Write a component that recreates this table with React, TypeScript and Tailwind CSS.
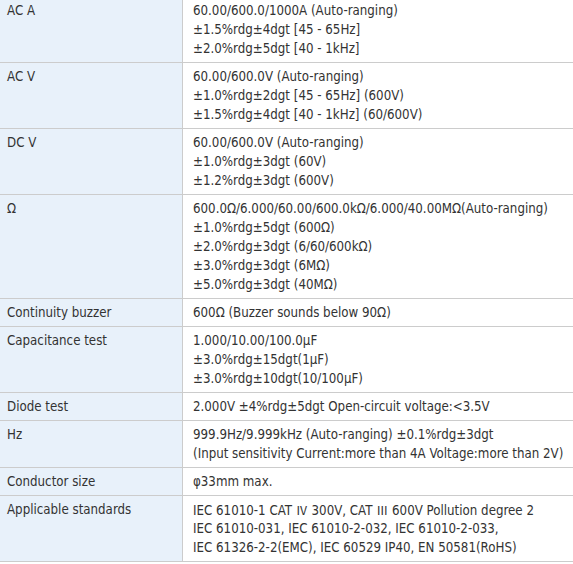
import React from "react";

const rows: { label: string; lines: React.ReactNode[] }[] = [
  { label: "AC A", lines: ["60.00/600.0/1000A (Auto-ranging)", "±1.5%rdg±4dgt [45 - 65Hz]", "±2.0%rdg±5dgt [40 - 1kHz]"] },
  { label: "AC V", lines: ["60.00/600.0V (Auto-ranging)", "±1.0%rdg±2dgt [45 - 65Hz] (600V)", "±1.5%rdg±4dgt [40 - 1kHz] (60/600V)"] },
  { label: "DC V", lines: ["60.00/600.0V (Auto-ranging)", "±1.0%rdg±3dgt (60V)", "±1.2%rdg±3dgt (600V)"] },
  {
    label: "Ω",
    lines: [
      "600.0Ω/6.000/60.00/600.0kΩ/6.000/40.00MΩ(Auto-ranging)",
      "±1.0%rdg±5dgt (600Ω)",
      "±2.0%rdg±3dgt (6/60/600kΩ)",
      "±3.0%rdg±3dgt (6MΩ)",
      "±5.0%rdg±3dgt (40MΩ)",
    ],
  },
  { label: "Continuity buzzer", lines: ["600Ω (Buzzer sounds below 90Ω)"] },
  { label: "Capacitance test", lines: ["1.000/10.00/100.0μF", "±3.0%rdg±15dgt(1μF)", "±3.0%rdg±10dgt(10/100μF)"] },
  { label: "Diode test", lines: ["2.000V ±4%rdg±5dgt Open-circuit voltage:<3.5V"] },
  { label: "Hz", lines: ["999.9Hz/9.999kHz (Auto-ranging) ±0.1%rdg±3dgt", "(Input sensitivity Current:more than 4A Voltage:more than 2V)"] },
  { label: "Conductor size", lines: ["φ33mm max."] },
  {
    label: "Applicable standards",
    lines: [
      <>
        IEC 61010-1 CAT <span className="font-['Noto_Sans_CJK_JP',sans-serif] text-[12px]">Ⅳ</span> 300V, CAT{" "}
        <span className="font-['Noto_Sans_CJK_JP',sans-serif] text-[12px]">Ⅲ</span> 600V Pollution degree 2
      </>,
      "IEC 61010-031, IEC 61010-2-032, IEC 61010-2-033,",
      "IEC 61326-2-2(EMC), IEC 60529 IP40, EN 50581(RoHS)",
    ],
  },
];

export default function App() {
  return (
    <div className="w-[573px] h-[564px] overflow-hidden bg-white">
      <div
        className="-mt-[3px] w-[600px] text-[13.2px] leading-[19px] text-[#333333]"
        style={{ fontFamily: '"DejaVu Sans Condensed", "DejaVu Sans", "Noto Sans CJK JP", sans-serif' }}
      >
        {rows.map((r) => (
          <div key={r.label} className="flex border-b border-[#cccccc]">
            <div className="w-[183px] shrink-0 border-r border-[#cccccc] bg-[#e8f1fa] pl-[7px] pt-[4px] pb-[4px]">
              {r.label}
            </div>
            <div className="flex-1 pl-[10px] pt-[4px] pb-[4px] whitespace-nowrap">
              {r.lines.map((l, i) => (
                <div key={i} className="h-[19px]">{l}</div>
              ))}
            </div>
          </div>
        ))}
      </div>
    </div>
  );
}
